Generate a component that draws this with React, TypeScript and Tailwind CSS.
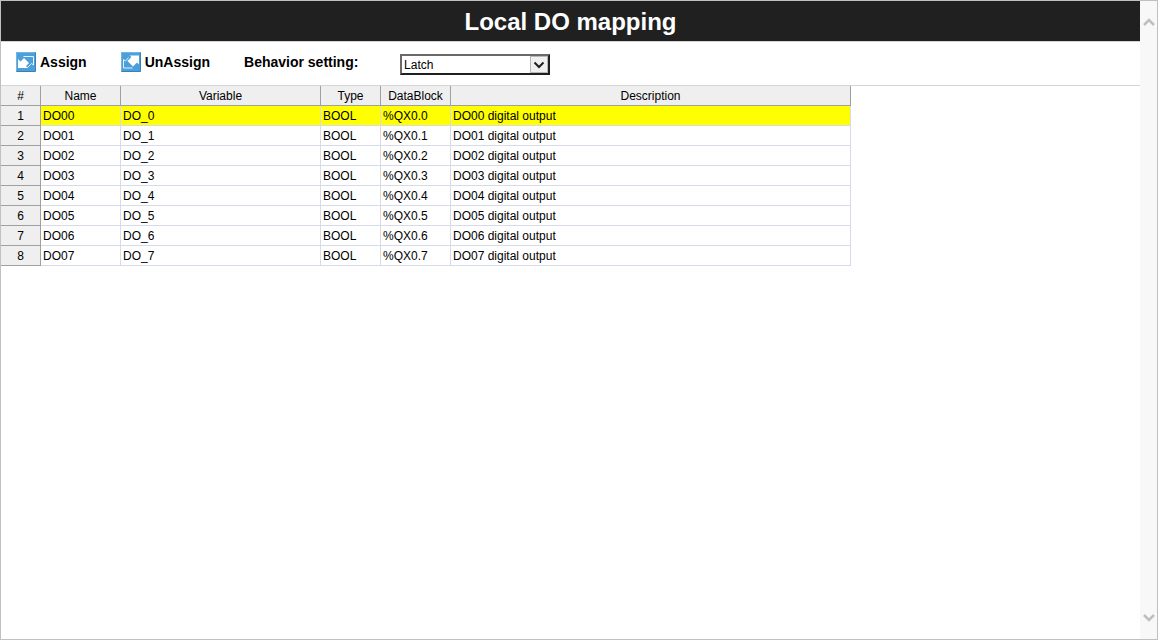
import { useState } from "react";

const columns = ["Name", "Variable", "Type", "DataBlock", "Description"];

const rows = Array.from({ length: 8 }, (_, i) => ({
  name: `DO0${i}`,
  variable: `DO_${i}`,
  type: "BOOL",
  block: `%QX0.${i}`,
  description: `DO0${i} digital output`,
}));

function IconTile({ children }: { children: React.ReactNode }) {
  return (
    <svg viewBox="0 0 20 20" className="size-5 shrink-0" aria-hidden="true">
      <rect width="20" height="20" rx="1" fill="#3a80b4" />
      <rect width="19" height="19" rx="1" fill="#74b4e0" />
      <rect x="1" y="1" width="18" height="18" fill="#4b9fdb" />
      {children}
    </svg>
  );
}

function AssignIcon() {
  return (
    <IconTile>
      <path d="M7.500 4.500h10v8.500l-2-1.500-4 4" fill="none" stroke="#e4f1fa" strokeWidth="1" />
      <path d="M2 16V7l2.500 2.500 3.500-3.500 5 5-3 3 2 2z" fill="#fff" />
    </IconTile>
  );
}

function UnAssignIcon() {
  return (
    <IconTile>
      <path d="M7.500 5.500l-3 3.500-2-1.500v8.500h9" fill="none" stroke="#e4f1fa" strokeWidth="1" />
      <path d="M18 3.500v9l-2-2-4 4L6.500 9l4-4-2-1.500z" fill="#fff" />
    </IconTile>
  );
}

function Chevron({ up = false }: { up?: boolean }) {
  return (
    <svg viewBox="0 0 12 10" className="h-[10px] w-3" aria-hidden="true">
      <path
        d={up ? "M1 8l5-5 5 5" : "M1 2l5 5 5-5"}
        fill="none"
        stroke="#bfbfbf"
        strokeWidth="2.6"
      />
    </svg>
  );
}

export default function App() {
  const [selected, setSelected] = useState(0);

  return (
    <div className="flex h-screen border border-[#c0c0c0] bg-white font-['Liberation_Sans',Arial,sans-serif] text-black">
      <main className="min-w-0 flex-1">
        <header className="flex h-10 items-center justify-center bg-[#202020] pt-[2px]">
          <h1 className="text-2xl font-bold text-white">Local DO mapping</h1>
        </header>

        <div className="flex h-[45px] items-center border-y border-[#d4d4d4] pt-[2px] pl-[15px] text-sm font-bold">
          <button type="button" className="flex items-center gap-1 pb-[6px]">
            <AssignIcon />
            Assign
          </button>
          <button type="button" className="ml-[34px] flex items-center gap-1 pb-[6px]">
            <UnAssignIcon />
            UnAssign
          </button>
          <label htmlFor="behavior" className="ml-[34px] w-[122px] pb-[6px]">
            Behavior setting:
          </label>
          <div className="ml-[34px] grid h-[21px] w-[150px] grid-cols-[1fr_18px] border-2 border-t-[#696969] border-r-[#202020] border-b-[#202020] border-l-[#696969] text-xs font-normal">
            <select
              id="behavior"
              defaultValue="Latch"
              className="col-span-2 col-start-1 row-start-1 h-full appearance-none bg-white pl-[2px] leading-4 outline-none"
            >
              <option>Latch</option>
              <option>Clear</option>
            </select>
            <span className="pointer-events-none col-start-2 row-start-1 flex items-center justify-center border border-[#b8b8b8] bg-[#f0f0f0]">
              <svg viewBox="0 0 12 8" className="h-2 w-3" aria-hidden="true">
                <path d="M1.500 1.500L6 6l4.500-4.500" fill="none" stroke="#202020" strokeWidth="2" />
              </svg>
            </span>
          </div>
        </div>

        <table className="w-[850px] table-fixed border-separate border-spacing-0 text-xs">
          <colgroup>
            <col className="w-10" />
            <col className="w-20" />
            <col className="w-[200px]" />
            <col className="w-[60px]" />
            <col className="w-[70px]" />
            <col />
          </colgroup>
          <thead>
            <tr className="h-5">
              {["#", ...columns].map((title) => (
                <th
                  key={title}
                  scope="col"
                  className="border-r border-b border-[#a0a0a0] bg-[#efefef] p-0 font-normal"
                >
                  {title}
                </th>
              ))}
            </tr>
          </thead>
          <tbody>
            {rows.map((row, i) => (
              <tr
                key={row.name}
                onClick={() => setSelected(i)}
                className={i === selected ? "h-5 bg-[#ffff00]" : "h-5 bg-white"}
              >
                <th
                  scope="row"
                  className="border-r border-b border-[#a0a0a0] bg-[#efefef] p-0 font-normal"
                >
                  {i + 1}
                </th>
                {Object.values(row).map((value) => (
                  <td
                    key={value}
                    className="border-r border-b border-[#d6dbe9] py-0 pr-0 pl-[2px] whitespace-nowrap"
                  >
                    {value}
                  </td>
                ))}
              </tr>
            ))}
          </tbody>
        </table>
      </main>

      <div className="flex w-[17px] shrink-0 flex-col items-center justify-between bg-[#f8f8f8] py-4">
        <button type="button" aria-label="Scroll up">
          <Chevron up />
        </button>
        <button type="button" aria-label="Scroll down">
          <Chevron />
        </button>
      </div>
    </div>
  );
}
